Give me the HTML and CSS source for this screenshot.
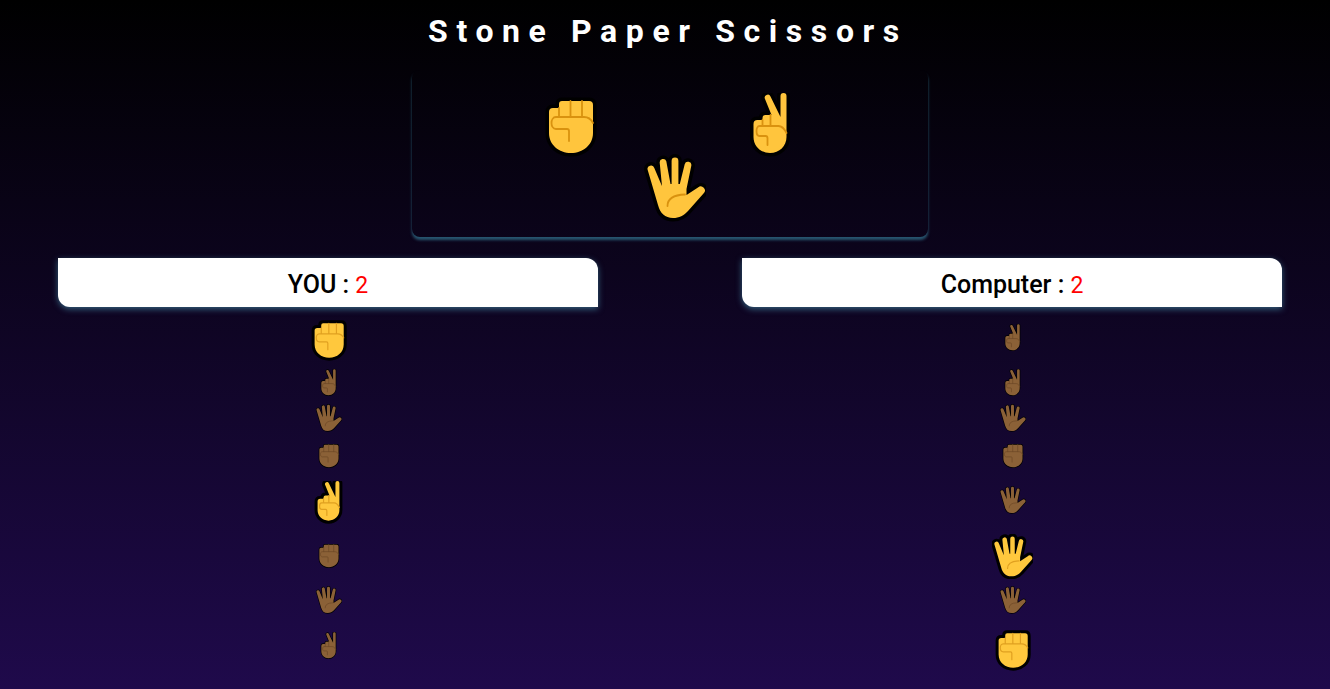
FILE: index.html
```html
<!doctype html>
<html lang="en">
<head>
  <meta charset="UTF-8">
  <title>Stone Paper Scissors</title>
  <link rel="stylesheet" href="styles.css">
</head>
<body>
  <svg class="defs" aria-hidden="true">
    <symbol id="stone" viewBox="-10 -8 62 68">
      <path class="skin" d="M13 0H40Q44 0 44 4V32C44 44 34 52 22 52C10 52 0 44 0 32V11Q0 7 4 7H10V3Q10 0 13 0Z"/>
      <path class="line" d="M10 7V16M21.5 0V16M33 0V16M44 22C42 18 39 16 35 16H7C4 16 2.5 19 2.5 22C2.5 25 4 28 7 28H18Q20 28 20 30V40"/>
    </symbol>
    <symbol id="scissors" viewBox="-14.5 0 62 68">
      <path class="skin" d="M27 3A3 3 0 0 1 33 3V44C33 53 26 60 16.5 60C7 60 0 53 0 44V31Q0 27 4 27H9V25Q9 22 12 22H18L11.5 6A3 3 0 0 1 17 3.5L27 24Z"/>
      <path class="line" d="M9 27V33M17 22V33M33 40C31 36 29 33 25 33H6C4 33 3 36 3 38C3 41 4 43 6 43H12Q14 43 14 45V52"/>
    </symbol>
    <symbol id="paper" viewBox="-4 -4 62 68">
      <path class="skin" d="M-.3 12A3.4 3.4 0 0 1 6.3 10L13.5 27L14 28L11.7 4.7A3.4 3.4 0 0 1 18.3 3.3L22.5 26H23.6V3A3.4 3.4 0 0 1 30.4 3V26H31.8L36.7 6.2A3.4 3.4 0 0 1 43.3 7.8L38.5 31V37L50 29.5A3.4 3.4 0 0 1 55.5 35.5L40 53C36 57.5 31 60 25 60C17 60 12 55 10 47Z"/>
      <path class="line" d="M19.5 48C19.5 41 24 37 37 36.5"/>
    </symbol>
  </svg>

  <h1 class="title">Stone Paper Scissors</h1>

  <section class="picker">
    <div class="picker-row">
      <svg class="hand big"><use href="#stone"/></svg>
      <svg class="hand big"><use href="#scissors"/></svg>
    </div>
    <svg class="hand big picker-paper"><use href="#paper"/></svg>
  </section>

  <main class="board">
    <div class="player">
      <div class="score-card">YOU : <span class="score">2</span></div>
      <div class="moves">
        <svg class="hand won"><use href="#stone"/></svg>
        <svg class="hand lost gap6"><use href="#scissors"/></svg>
        <svg class="hand lost gap4"><use href="#paper"/></svg>
        <svg class="hand lost gap8"><use href="#stone"/></svg>
        <svg class="hand won gap10"><use href="#scissors"/></svg>
        <svg class="hand lost gap15"><use href="#stone"/></svg>
        <svg class="hand lost gap14"><use href="#paper"/></svg>
        <svg class="hand lost gap17"><use href="#scissors"/></svg>
      </div>
    </div>
    <div class="player">
      <div class="score-card">Computer : <span class="score">2</span></div>
      <div class="moves">
        <svg class="hand lost gap6"><use href="#scissors"/></svg>
        <svg class="hand lost gap15"><use href="#scissors"/></svg>
        <svg class="hand lost gap4"><use href="#paper"/></svg>
        <svg class="hand lost gap8"><use href="#stone"/></svg>
        <svg class="hand lost gap14"><use href="#paper"/></svg>
        <svg class="hand won gap19"><use href="#paper"/></svg>
        <svg class="hand lost gap6"><use href="#paper"/></svg>
        <svg class="hand won gap13"><use href="#stone"/></svg>
      </div>
    </div>
  </main>
</body>
</html>
```

FILE: styles.css
```css
html, body {
  height: 100%;
}

body {
  margin: 0;
  min-height: 689px;
  box-sizing: border-box;
  overflow: hidden;
  font-family: Roboto, "Liberation Sans", sans-serif;
  background: linear-gradient(#000000, #1f0a4b);
}

.defs {
  display: none;
}

.title {
  margin: 0;
  padding: 12px 0 0 6px;
  height: 58px;
  box-sizing: border-box;
  text-align: center;
  color: #ffffff;
  font-size: 32px;
  line-height: 38px;
  font-weight: 700;
  letter-spacing: 8.6px;
}

.picker {
  width: 516px;
  height: 167px;
  margin: 12px 0 0 412px;
  display: flex;
  flex-direction: column;
  align-items: center;
  box-sizing: border-box;
  padding-top: 23px;
  border-radius: 8px;
  box-shadow: 0 3px 3px rgba(70, 170, 200, 0.5);
}

.picker-row {
  display: flex;
  gap: 138px;
}

.picker-paper {
  margin: -7px 0 0 10px;
}

.board {
  display: flex;
  justify-content: space-between;
  padding: 21px 48px 0 58px;
}

.player {
  width: 540px;
}

.score-card {
  height: 49px;
  line-height: 53px;
  text-align: center;
  background: #ffffff;
  color: #000000;
  font-size: 25px;
  font-weight: 500;
  border-radius: 0 12px 0 12px;
  box-shadow: 0 2px 6px rgba(90, 190, 220, 0.5);
}

.score {
  color: #ff0000;
  font-size: 23px;
  font-weight: 400;
}

.moves {
  display: flex;
  flex-direction: column;
  align-items: center;
  padding-top: 11px;
}

.hand {
  display: block;
  overflow: visible;
  flex: none;
}

.skin {
  fill: var(--skin);
  stroke: #000000;
  stroke-width: var(--edge);
  stroke-linejoin: round;
  paint-order: stroke;
}

.line {
  fill: none;
  stroke: var(--crease);
  stroke-width: 1.8;
  stroke-linecap: round;
  stroke-linejoin: round;
}

.big {
  width: 62px;
  height: 68px;
  --skin: #ffc53d;
  --crease: #d9920f;
  --edge: 7;
}

.won {
  width: 41px;
  height: 45px;
  --skin: #ffc83d;
  --crease: #e0a020;
  --edge: 9;
}

.lost {
  width: 27px;
  height: 30px;
  --skin: #8b6137;
  --crease: #6f4a28;
  --edge: 3;
}

.gap4 { margin-top: 4px; }
.gap6 { margin-top: 6px; }
.gap8 { margin-top: 8px; }
.gap10 { margin-top: 10px; }
.gap13 { margin-top: 13px; }
.gap14 { margin-top: 14px; }
.gap15 { margin-top: 15px; }
.gap17 { margin-top: 17px; }
.gap19 { margin-top: 19px; }
```
